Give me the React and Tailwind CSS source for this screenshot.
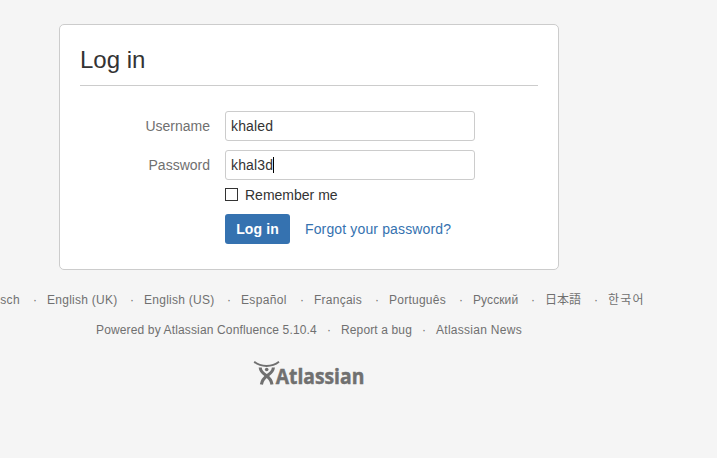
const languages = [
  { label: 'Deutsch', width: 'w-[43px] tracking-[0.45px]' },
  { label: 'English (UK)', width: 'w-[70px] tracking-[0.27px]' },
  { label: 'English (US)', width: 'w-[70px] tracking-[0.27px]' },
  { label: 'Español', width: 'w-[46px] tracking-[0.35px]' },
  { label: 'Français', width: 'w-[48px] tracking-[0.25px]' },
  { label: 'Português', width: 'w-[57px] tracking-[0.25px]' },
  { label: 'Русский', width: 'w-[45px] tracking-[0.1px]' },
  { label: '日本語', width: 'w-9' },
  { label: '한국어', width: 'w-9 tracking-[1.2px]' },
];

const links = [
  { label: 'Powered by Atlassian Confluence 5.10.4', width: 'w-[221px] tracking-[0.14px]' },
  { label: 'Report a bug', width: 'w-[71px] tracking-[0.13px]' },
  { label: 'Atlassian News', width: 'w-[86px] tracking-[0.28px]' },
];

function Field({ label, value, focused }) {
  return (
    <div className="flex h-[30px] items-center">
      <label className="w-[130px] text-right text-[#707070]">{label}</label>
      <div className="ml-[15px] flex h-[30px] w-[250px] items-center rounded-[3px] border border-[#ccc] bg-white pl-[5px] text-[#333]">
        <span className="tracking-[0.15px]">{value}</span>
        {focused && <span className="h-4 w-px bg-black" />}
      </div>
    </div>
  );
}

function AtlassianLogo() {
  return (
    <svg width="112" height="28" viewBox="0 0 112 28" className="overflow-visible text-[#707070]" fill="none" stroke="currentColor">
      <path d="M1.2 1.8C8 7.4 19 7.4 26 1.8" strokeWidth="1.8" />
      <circle cx="13.7" cy="9.5" r="1.8" fill="currentColor" stroke="none" />
      <path d="M7.2 7.5C7.8 16 17.8 14 19 24.5" strokeWidth="3.1" />
      <path d="M20.4 7.5C19.8 16 9.8 14 8.4 24.5" strokeWidth="3.1" />
      <text
        x="22.8"
        y="24"
        textLength="88.5"
        lengthAdjust="spacingAndGlyphs"
        fill="currentColor"
        strokeWidth="0.5"
        className="font-['Open_Sans',sans-serif] text-[21px] font-bold"
      >
        Atlassian
      </text>
    </svg>
  );
}

export default function App() {
  return (
    <div className="flex h-[458px] w-[717px] flex-col overflow-hidden bg-[#f5f5f5] pt-6 font-['Liberation_Sans','Noto_Sans_CJK_JP','Noto_Sans_CJK_KR',sans-serif] text-sm leading-5 text-[#333]">
      <main className="ml-[59px] h-[246px] w-[500px] shrink-0 rounded-[5px] border border-[#ccc] bg-white px-5">
        <h1 className="h-[61px] border-b border-[#ccc] pt-5 text-2xl leading-[30px]">Log in</h1>
        <div className="mt-[25px] flex flex-col gap-[9px]">
          <Field label="Username" value="khaled" />
          <Field label="Password" value="khal3d" focused />
        </div>
        <div className="mt-[5px] ml-[145px] flex h-5 items-center gap-[7px]">
          <span className="mb-[2px] size-[13px] border border-[#333] bg-white" />
          <span>Remember me</span>
        </div>
        <div className="mt-[9px] ml-[145px] flex items-center gap-[15px]">
          <button className="h-[30px] w-[65px] rounded-[3px] bg-[#3572b0] font-bold tracking-[0.1px] text-white">Log in</button>
          <a className="tracking-[0.14px] text-[#3572b0]">Forgot your password?</a>
        </div>
      </main>
      <footer className="text-xs leading-5 text-[#707070]">
        <ul className="mt-5 -ml-[27px] flex whitespace-nowrap">
          {languages.map(({ label, width }, i) => (
            <li key={label} className={i === 1 ? 'ml-1 flex' : 'flex'}>
              {i > 0 && <span className="w-[27px] pl-[13px]">·</span>}
              <span className={width}>{label}</span>
            </li>
          ))}
        </ul>
        <ul className="mt-[10px] ml-24 flex whitespace-nowrap">
          {links.map(({ label, width }, i) => (
            <li key={label} className="flex">
              {i > 0 && <span className="w-6 pl-[10px]">·</span>}
              <span className={width}>{label}</span>
            </li>
          ))}
        </ul>
        <div className="mt-5 ml-[253px]">
          <AtlassianLogo />
        </div>
      </footer>
    </div>
  );
}
